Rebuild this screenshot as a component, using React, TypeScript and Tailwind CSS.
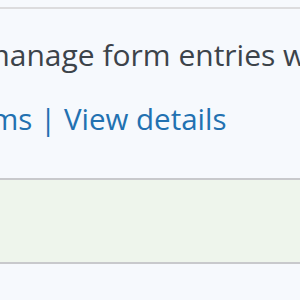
import React from 'react';

export default function App() {
  return (
    <div className="w-[300px] h-[300px] overflow-hidden bg-[#f6f9fd] font-['Open_Sans',sans-serif]">
      <div className="h-[7px] bg-[#f6f9fd]" />
      <div className="border-t-2 border-b-2 border-t-[#dcdcde] border-b-[#c8c9cc] bg-[#f6f9fd] h-[173px] pt-[26px]">
        <p className="whitespace-nowrap text-[30px] leading-[40px] text-[#3c434a] -ml-[18px]">
          manage form entries with ease.
        </p>
        <p className="whitespace-nowrap text-[29.5px] leading-[40px] text-[#2271b1] mt-[24px] -ml-[9px]">
          <a>ms</a> | <a>View details</a>
        </p>
      </div>
      <div className="h-[84px] bg-[#eef5ec] border-b-2 border-[#c8c9cc]" />
      <div className="bg-[#f6f9fd] flex-1" />
    </div>
  );
}
